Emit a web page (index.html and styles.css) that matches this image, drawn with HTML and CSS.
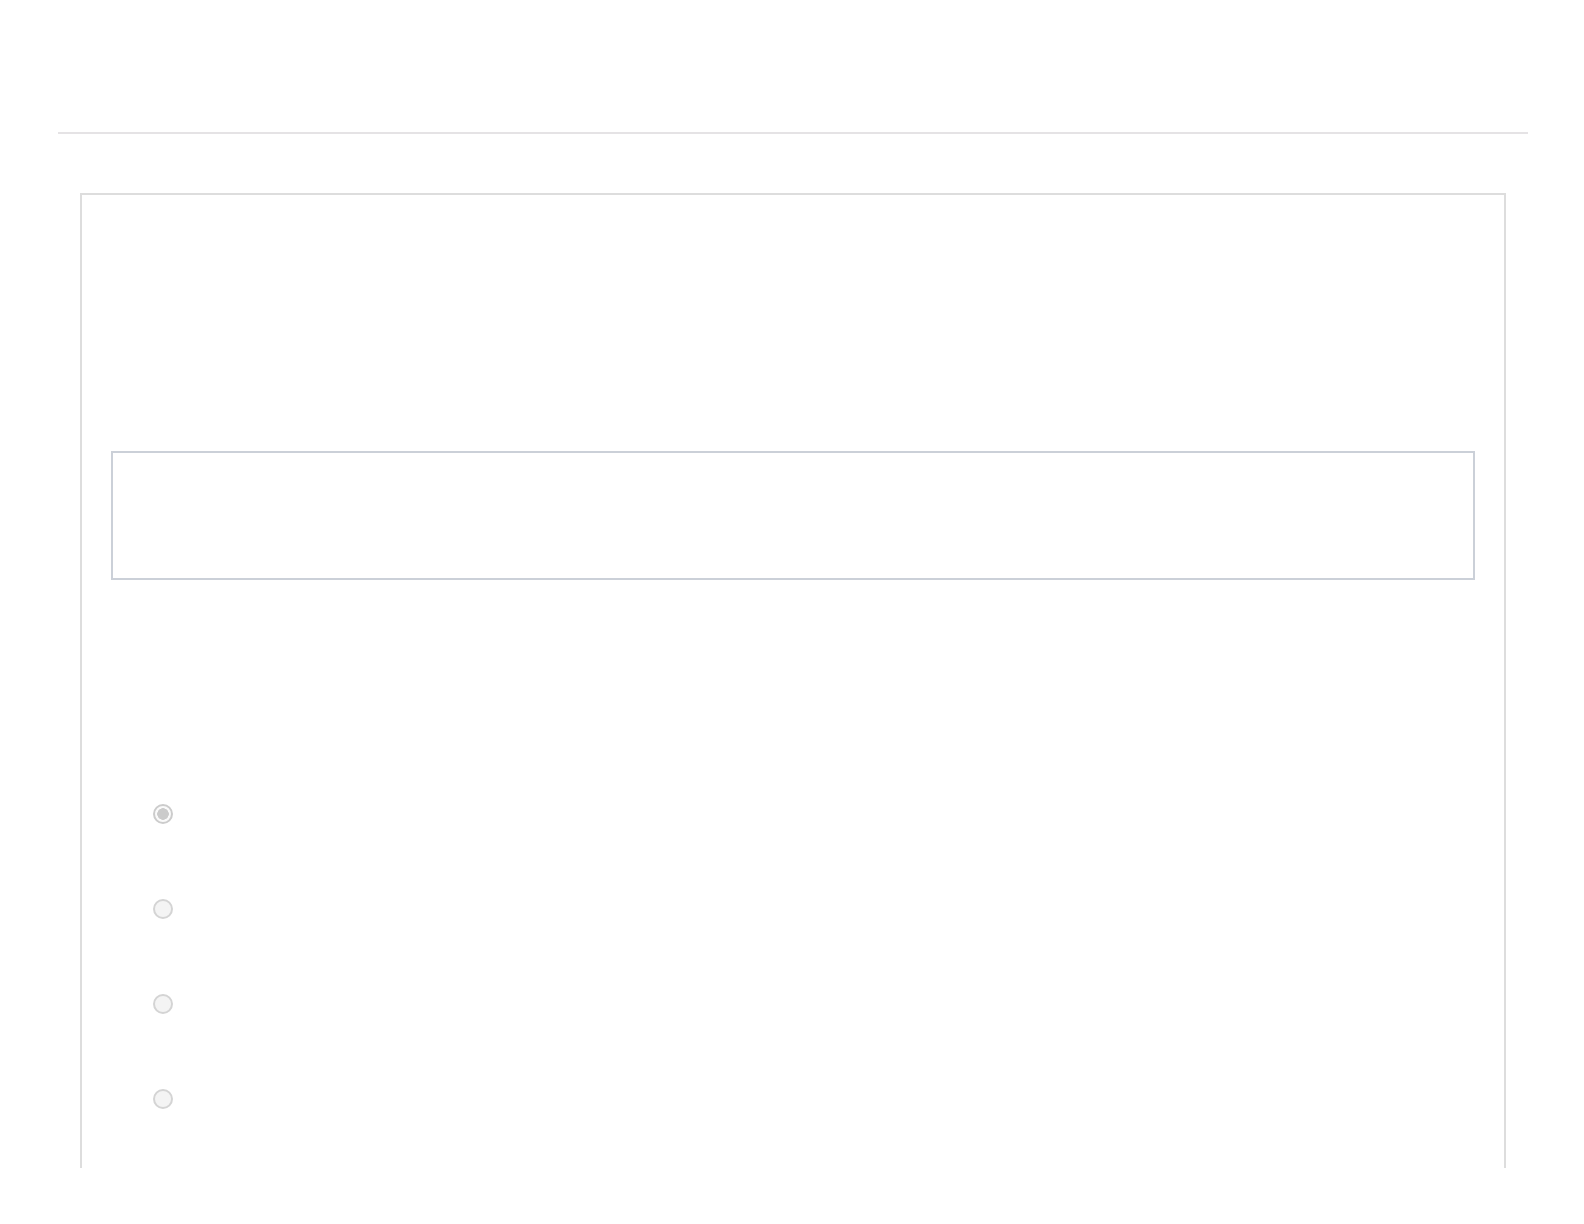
FILE: index.html
```html
<!DOCTYPE html>
<html lang="en">
<head>
<meta charset="utf-8">
<title>Form</title>
<link rel="stylesheet" href="styles.css">
</head>
<body>
<div class="page">
  <header class="topbar"></header>
  <hr class="rule">
  <main class="card">
    <div class="card-head"></div>
    <div class="field-box"></div>
    <div class="options">
      <label class="option"><input type="radio" name="opt" class="radio" checked disabled></label>
      <label class="option"><input type="radio" name="opt" class="radio" disabled></label>
      <label class="option"><input type="radio" name="opt" class="radio" disabled></label>
      <label class="option"><input type="radio" name="opt" class="radio" disabled></label>
    </div>
  </main>
</div>
</body>
</html>
```
FILE: styles.css
```css
* { box-sizing: border-box; }
html, body {
  margin: 0;
  padding: 0;
  background: #ffffff;
  font-family: "Liberation Sans", Arial, sans-serif;
}
.page {
  width: 1470px;
  margin-left: 58px;
}
.topbar {
  height: 132px;
}
.rule {
  margin: 0;
  border: 0;
  height: 2px;
  background: #e5e3e5;
}
.card {
  margin: 59px 22px 0;
  height: 975px;
  border: 2px solid #dddddd;
  border-bottom: 0;
  padding: 0 29px;
  background: #ffffff;
}
.card-head {
  height: 256px;
}
.field-box {
  height: 129px;
  border: 2px solid #cbd0d8;
  background: #ffffff;
}
.options {
  display: flex;
  flex-direction: column;
  padding-top: 224px;
  padding-left: 42px;
}
.option {
  display: flex;
  height: 95px;
  align-items: flex-start;
}
.radio {
  appearance: none;
  -webkit-appearance: none;
  margin: 0;
  width: 20px;
  height: 20px;
  border-radius: 50%;
  border: 2px solid #d4d4d4;
  background: #f4f4f4;
}
.radio:checked {
  border: 2px solid #cccccc;
  background: radial-gradient(circle, #cbcbcb 0 5.5px, #fafafa 6px);
}
```
